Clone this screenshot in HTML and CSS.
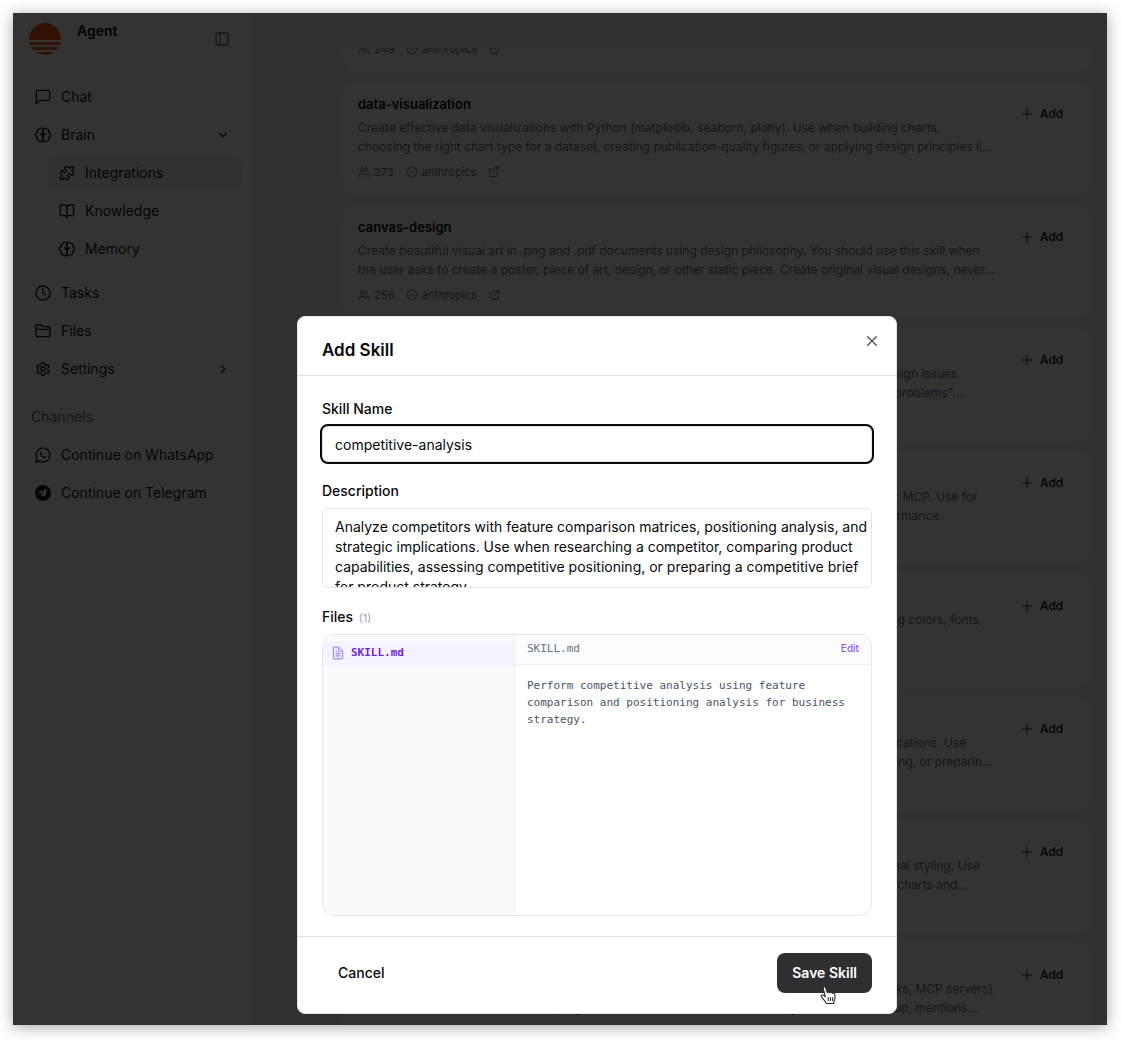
FILE: index.html
```
<!DOCTYPE html>
<html lang="en">
<head>
    <meta charset="UTF-8">
    <meta name="viewport" content="width=device-width, initial-scale=1.0">
    <title>Agent - Integrations</title>
    <link rel="stylesheet" href="styles.css">
</head>
<body>

<!-- Shared icons -->
<svg class="sprite" xmlns="http://www.w3.org/2000/svg">
    <symbol id="i-panel" viewBox="0 0 24 24"><rect x="3" y="3" width="18" height="18" rx="2"/><path d="M9 3v18"/></symbol>
    <symbol id="i-chat" viewBox="0 0 24 24"><path d="M22 15a2 2 0 0 1-2 2H7l-5 5V4a2 2 0 0 1 2-2h16a2 2 0 0 1 2 2z"/></symbol>
    <symbol id="i-brain" viewBox="0 0 24 24"><path d="M12 4a2.800 2.800 0 0 0-5.400-.5 3.300 3.300 0 0 0-3.200 4.500 4.300 4.300 0 0 0 0 8 3.400 3.400 0 0 0 3.300 4.700A2.800 2.800 0 0 0 12 20z"/><path d="M12 4a2.800 2.800 0 0 1 5.400-.5 3.300 3.300 0 0 1 3.200 4.500 4.300 4.300 0 0 1 0 8 3.400 3.400 0 0 1-3.300 4.700A2.800 2.800 0 0 1 12 20z"/><path d="M8 10c.5 1.500 2 2 4 2s3.500-.5 4-2"/></symbol>
    <symbol id="i-puzzle" viewBox="0 0 24 24"><path d="M15.39 4.39a1 1 0 0 0 1.68-.474 2.5 2.5 0 1 1 3.014 3.015 1 1 0 0 0-.474 1.68l1.683 1.682a2.414 2.414 0 0 1 0 3.414L19.61 15.39a1 1 0 0 1-1.68-.474 2.5 2.5 0 1 0-3.014 3.015 1 1 0 0 1 .474 1.68l-1.683 1.682a2.414 2.414 0 0 1-3.414 0L8.61 19.61a1 1 0 0 0-1.68.474 2.5 2.5 0 1 1-3.014-3.015 1 1 0 0 0 .474-1.68l-1.683-1.682a2.414 2.414 0 0 1 0-3.414L4.39 8.61a1 1 0 0 1 1.68.474 2.5 2.5 0 1 0 3.014-3.015 1 1 0 0 1-.474-1.68l1.683-1.682a2.414 2.414 0 0 1 3.414 0z"/></symbol>
    <symbol id="i-book" viewBox="0 0 24 24"><path d="M12 6.500v15M2 3h6a4 4 0 0 1 4 4 4 4 0 0 1 4-4h6v16h-7a3 3 0 0 0-3 3 3 3 0 0 0-3-3H2z"/></symbol>
    <symbol id="i-clock" viewBox="0 0 24 24"><circle cx="12" cy="12" r="10.500"/><path d="M12 6v6l3.500 2.500"/></symbol>
    <symbol id="i-folder" viewBox="0 0 24 24"><path d="M1.500 9.500h21M1.500 18.500V4.500a2 2 0 0 1 2-2h5l3 3h9a2 2 0 0 1 2 2v11a2 2 0 0 1-2 2h-17a2 2 0 0 1-2-2z"/></symbol>
    <symbol id="i-gear" viewBox="0 0 24 24"><path d="M12.22 2h-.44a2 2 0 0 0-2 2v.18a2 2 0 0 1-1 1.730l-.430.250a2 2 0 0 1-2 0l-.150-.080a2 2 0 0 0-2.730.730l-.220.380a2 2 0 0 0 .730 2.730l.150.100a2 2 0 0 1 1 1.720v.510a2 2 0 0 1-1 1.740l-.150.090a2 2 0 0 0-.730 2.730l.220.380a2 2 0 0 0 2.730.730l.150-.080a2 2 0 0 1 2 0l.430.250a2 2 0 0 1 1 1.730V20a2 2 0 0 0 2 2h.440a2 2 0 0 0 2-2v-.180a2 2 0 0 1 1-1.730l.430-.250a2 2 0 0 1 2 0l.150.080a2 2 0 0 0 2.730-.730l.220-.390a2 2 0 0 0-.730-2.730l-.150-.080a2 2 0 0 1-1-1.740v-.500a2 2 0 0 1 1-1.740l.150-.090a2 2 0 0 0 .730-2.730l-.220-.380a2 2 0 0 0-2.730-.730l-.150.080a2 2 0 0 1-2 0l-.430-.250a2 2 0 0 1-1-1.730V4a2 2 0 0 0-2-2z"/><circle cx="12" cy="12" r="3"/></symbol>
    <symbol id="i-down" viewBox="0 0 24 24"><path d="m6 9 6 6 6-6"/></symbol>
    <symbol id="i-right" viewBox="0 0 24 24"><path d="m9 18 6-6-6-6"/></symbol>
    <symbol id="i-whatsapp" viewBox="0 0 24 24"><path d="M1.500 22.500l1.500-5.600A10.400 10.400 0 1 1 7.200 21z"/><path d="M8.300 6.800c-1.300.8-1.500 2.600-.7 4.400 1.100 2.600 3 4.400 5.600 5.300 1.600.5 3.200 0 3.700-1.500l-2.600-1.500-1.300 1.200c-1.600-.8-2.600-1.800-3.300-3.200l1-1.200z" fill="currentColor" stroke="none"/></symbol>
    <symbol id="i-telegram" viewBox="0 0 24 24"><path d="M12 0a12 12 0 1 0 0 24 12 12 0 0 0 0-24zm5.600 7.300-2 9.700c-.2.700-.6.900-1.100.600l-3-2.300-1.600 1.500c-.2.200-.4.200-.6.100l.3-3.200 5.800-5.200-7.100 4.400-3.100-1c-.6-.2-.6-.6.200-.9l11.300-4.500c.6-.2 1.100.1.900.8z" fill="currentColor" fill-rule="evenodd" stroke="none"/></symbol>
    <symbol id="i-users" viewBox="0 0 24 24"><path d="M16 21v-2a4 4 0 0 0-4-4H6a4 4 0 0 0-4 4v2M22 21v-2a4 4 0 0 0-3-3.870M16 3.130a4 4 0 0 1 0 7.750"/><circle cx="9" cy="7" r="4"/></symbol>
    <symbol id="i-badge" viewBox="0 0 24 24"><path d="M3.850 8.620a4 4 0 0 1 4.780-4.770 4 4 0 0 1 6.740 0 4 4 0 0 1 4.780 4.780 4 4 0 0 1 0 6.740 4 4 0 0 1-4.770 4.780 4 4 0 0 1-6.750 0 4 4 0 0 1-4.780-4.770 4 4 0 0 1 0-6.760z"/><path d="m9 12 2 2 4-4"/></symbol>
    <symbol id="i-link" viewBox="0 0 24 24"><path d="M15 3h6v6M10 14 21 3M18 13v6a2 2 0 0 1-2 2H5a2 2 0 0 1-2-2V8a2 2 0 0 1 2-2h6"/></symbol>
    <symbol id="i-plus" viewBox="0 0 24 24"><path d="M2 12h20M12 2v20"/></symbol>
    <symbol id="i-x" viewBox="0 0 24 24"><path d="M18.500 5.500l-13 13M5.500 5.500l13 13"/></symbol>
</svg>

<div class="window">
    <aside class="sidebar">
        <div class="brand">
            <svg class="logo" viewBox="0 0 32 32">
                <clipPath id="sun"><circle cx="16" cy="16" r="16"/></clipPath>
                <g clip-path="url(#sun)">
                    <path d="M0 0h32v17H0zM0 19h32v3H0zM0 24h32v3H0zM0 29h32v3H0z"/>
                </g>
            </svg>
            <span class="brand-name">Agent</span>
            <button class="icon-button" aria-label="Toggle sidebar"><svg class="icon"><use href="#i-panel"/></svg></button>
        </div>

        <nav class="nav">
            <a href="#" class="nav-item"><svg class="icon"><use href="#i-chat"/></svg>Chat</a>
            <a href="#" class="nav-item"><svg class="icon"><use href="#i-brain"/></svg>Brain<svg class="icon chevron"><use href="#i-down"/></svg></a>
            <div class="subnav">
                <a href="#" class="nav-item active"><svg class="icon"><use href="#i-puzzle"/></svg>Integrations</a>
                <a href="#" class="nav-item"><svg class="icon"><use href="#i-book"/></svg>Knowledge</a>
                <a href="#" class="nav-item"><svg class="icon"><use href="#i-brain"/></svg>Memory</a>
            </div>
            <a href="#" class="nav-item"><svg class="icon"><use href="#i-clock"/></svg>Tasks</a>
            <a href="#" class="nav-item"><svg class="icon"><use href="#i-folder"/></svg>Files</a>
            <a href="#" class="nav-item"><svg class="icon"><use href="#i-gear"/></svg>Settings<svg class="icon chevron"><use href="#i-right"/></svg></a>
            <div class="nav-label">Channels</div>
            <a href="#" class="nav-item"><svg class="icon"><use href="#i-whatsapp"/></svg>Continue on WhatsApp</a>
            <a href="#" class="nav-item"><svg class="icon"><use href="#i-telegram"/></svg>Continue on Telegram</a>
        </nav>
    </aside>

    <main class="main">
        <div class="scroll">
            <div class="skills" id="skills"></div>
        </div>
    </main>

    <div class="overlay">
        <form class="modal" role="dialog" aria-labelledby="modal-title">
            <header class="modal-header">
                <h2 id="modal-title">Add Skill</h2>
                <button type="button" class="close" aria-label="Close"><svg class="icon"><use href="#i-x"/></svg></button>
            </header>

            <div class="modal-body">
                <div class="field">
                    <label for="skill-name">Skill Name</label>
                    <input type="text" id="skill-name" class="input focused" value="competitive-analysis">
                </div>
                <div class="field">
                    <label for="skill-desc">Description</label>
                    <textarea id="skill-desc" class="input">Analyze competitors with feature comparison matrices, positioning analysis, and
strategic implications. Use when researching a competitor, comparing product
capabilities, assessing competitive positioning, or preparing a competitive brief
for product strategy.</textarea>
                </div>
                <div class="field">
                    <div class="files-label">Files <span class="count">(1)</span></div>
                    <div class="files">
                        <div class="file-list">
                            <button type="button" class="file">
                                <svg class="file-icon" viewBox="0 0 24 24"><path d="M4 3.500A1.500 1.500 0 0 1 5.500 2H13l7 7v11.500a1.500 1.500 0 0 1-1.500 1.500h-13A1.500 1.500 0 0 1 4 20.500z"/><path d="M13 2v7h7M8 9h2M8 13h8M8 17h8"/></svg>
                                SKILL.md
                            </button>
                        </div>
                        <div class="preview">
                            <div class="preview-header">
                                <span class="preview-name">SKILL.md</span>
                                <button type="button" class="edit">Edit</button>
                            </div>
                            <div class="preview-text">Perform competitive analysis using feature comparison and positioning analysis for business strategy.</div>
                        </div>
                    </div>
                </div>
            </div>

            <footer class="modal-footer">
                <button type="button" class="button">Cancel</button>
                <button type="button" class="button primary">Save Skill
                    <svg class="cursor" viewBox="0 1 16 18"><path d="M6.500 17.500C5 15 3.500 13.300 2 11.500c-.8-1 .6-2.100 1.700-1.400L5.600 11.700 3.700 4c-.4-1.700 1.700-2.200 2.200-.6L7.400 8c.2-1 1.900-1.100 2.200.1.400-.9 2-.9 2.300.4.600-.7 2-.4 2.200.8.400 2 .6 3.300 0 4.900l-.9 2v1.500z"/><path d="M8.200 12v3.500M10.200 12v3.500M12.200 12v3.500"/></svg>
                </button>
            </footer>
        </form>
    </div>
</div>

<script src="script.js"></script>
</body>
</html>
```
FILE: styles.css
```
* {
    box-sizing: border-box;
}
body {
    margin: 0;
    padding: 13px 15px 15px 13px;
    height: 100vh;
    background-color: #fff;
    font-family: Inter, "Liberation Sans", sans-serif;
    font-size: 14px;
    line-height: 20px;
    color: #09090b;
}
button, input, textarea {
    font: inherit;
    color: inherit;
}
button {
    padding: 0;
    border: none;
    background: none;
    cursor: pointer;
}
.sprite {
    position: absolute;
    width: 0;
    height: 0;
}
.icon {
    width: 16px;
    height: 16px;
    flex-shrink: 0;
    fill: none;
    stroke: currentColor;
    stroke-width: 2;
    stroke-linecap: round;
    stroke-linejoin: round;
}
.window {
    position: relative;
    display: flex;
    height: 100%;
    overflow: hidden;
}
body::before {
    content: "";
    position: absolute;
    inset: 13px 15px 15px 13px;
    box-shadow: 0 2px 14px rgba(0, 0, 0, 0.35);
}

/* Sidebar */
.sidebar {
    width: 239px;
    flex-shrink: 0;
    padding: 10px;
    background-color: #fff;
}
.brand {
    display: flex;
    align-items: flex-start;
    padding: 0 12px 0 6px;
    margin-bottom: 26px;
}
.logo {
    width: 32px;
    height: 32px;
    fill: #ff5a1f;
}
.brand-name {
    flex: 1;
    margin-left: 16px;
    line-height: 16px;
    font-weight: 600;
}
.icon-button {
    display: flex;
    align-self: center;
    color: #64748b;
}
.nav {
    display: flex;
    flex-direction: column;
    gap: 6px;
}
.nav-item {
    display: flex;
    align-items: center;
    gap: 10px;
    height: 32px;
    padding: 0 12px;
    border-radius: 8px;
    color: #18181b;
    text-decoration: none;
}
.nav-item.active {
    background-color: #f1f5f9;
}
.chevron {
    width: 14px;
    height: 14px;
    margin-left: auto;
}
.subnav {
    display: flex;
    flex-direction: column;
    gap: 6px;
    padding: 0 0 6px 24px;
}
.nav-label {
    padding: 16px 8px 6px;
    color: #64748b;
}

/* Skill list */
.main {
    flex: 1;
    padding: 35px 15px 0 90px;
    background: linear-gradient(#f7f6f0 0, #f5f5f5 60px, #f5f5f5 150px, #f6f5ef 220px, #f6f5ef 380px, #f5f5f5 460px, #f5f5f5 620px, #f6f5ef 690px, #f5f5f5 760px);
}
.scroll {
    height: 100%;
    overflow: hidden;
}
.skills {
    display: flex;
    flex-direction: column;
    gap: 8px;
    margin-top: -90px;
}
.skill {
    display: flex;
    align-items: flex-start;
    justify-content: space-between;
    gap: 12px;
    flex-shrink: 0;
    padding: 14px 15px 15px;
    border: 1px solid #f8f8f8;
    border-radius: 16px;
    background-color: rgba(255, 255, 255, 0.7);
}
.skill-info {
    width: 638px;
}
.skill h3 {
    margin: 0 0 6px;
    font-size: 13px;
    line-height: 16px;
    font-weight: 600;
}
.skill p {
    height: 38px;
    margin: 0 0 8px;
    font-size: 12px;
    line-height: 19px;
    color: #64748b;
    white-space: pre;
}
.meta {
    display: flex;
    align-items: center;
    gap: 12px;
    font-size: 11px;
    line-height: 16px;
    color: #64748b;
}
.meta span {
    display: flex;
    align-items: center;
    gap: 4px;
}
.meta .icon, .add .icon {
    width: 12px;
    height: 12px;
}
.add {
    display: flex;
    align-items: center;
    gap: 7px;
    height: 32px;
    margin-top: 2px;
    padding: 0 12px;
    border: 1px solid #f1f3f6;
    border-radius: 10px;
    font-size: 12px;
    font-weight: 500;
}
.add .icon {
    color: #3f3f46;
}

/* Modal */
.overlay {
    position: absolute;
    inset: 0;
    display: flex;
    justify-content: center;
    align-items: flex-end;
    padding: 0 0 11px 74px;
    background-color: rgba(0, 0, 0, 0.8);
}
.modal {
    width: 600px;
    border: 1px solid #e4e4e7;
    border-radius: 8px;
    background-color: #fff;
}
.modal-header {
    display: flex;
    justify-content: space-between;
    padding: 16px 16px 13px 24px;
    border-bottom: 1px solid #e4e4e7;
}
.modal-header h2 {
    margin: 5px 0 0;
    font-size: 17px;
    line-height: 24px;
    font-weight: 600;
}
.close {
    display: flex;
    height: 16px;
    color: #52525b;
}
.modal-body {
    display: flex;
    flex-direction: column;
    gap: 19px;
    padding: 23px 24px 20px;
}
.field {
    display: flex;
    flex-direction: column;
    gap: 7px;
    font-weight: 500;
}
.input {
    width: 100%;
    height: 36px;
    padding: 7px 12px;
    border: 1px solid #e4e4e7;
    border-radius: 6px;
    background-color: #fff;
    font-weight: 400;
    outline: none;
}
.input.focused {
    outline: 2px solid #09090b;
}
textarea.input {
    display: block;
    height: 80px;
    padding: 8px 0 8px 12px;
    resize: none;
    overflow: hidden;
}
.files-label {
    height: 20px;
}
.count {
    margin-left: 2px;
    font-size: 11px;
    font-weight: 400;
    color: #94a3b8;
}
.files {
    display: flex;
    height: 282px;
    border: 1px solid #e2e8f0;
    border-radius: 12px;
    overflow: hidden;
    font-family: "DejaVu Sans Mono", monospace;
    font-size: 11px;
    line-height: 17px;
    font-weight: 400;
}
.file-list {
    width: 192px;
    padding-top: 6px;
    border-right: 1px solid #edf1f7;
    background-color: #fafbfe;
}
.file {
    display: flex;
    align-items: center;
    gap: 6px;
    width: 100%;
    height: 25px;
    padding: 0 8px 2px;
    background-color: #f5f3ff;
    font-weight: 700;
    color: #6d28d9;
}
.file-icon {
    width: 14px;
    height: 14px;
    fill: #ede9fe;
    stroke: #a78bfa;
    stroke-width: 2;
    stroke-linejoin: round;
}
.preview {
    flex: 1;
}
.preview-header {
    display: flex;
    align-items: center;
    justify-content: space-between;
    height: 30px;
    padding: 0 12px 2px;
    border-bottom: 1px solid #edf1f7;
    background-color: #fcfdfe;
    color: #64748b;
}
.edit {
    font-family: Inter, sans-serif;
    font-size: 10px;
    font-weight: 500;
    color: #9352f5;
}
.preview-text {
    padding: 12px;
    color: #475569;
}
.modal-footer {
    display: flex;
    justify-content: space-between;
    padding: 16px 24px 20px;
    border-top: 1px solid #e4e4e7;
}
.button {
    position: relative;
    height: 40px;
    padding: 0 16px;
    border-radius: 8px;
    font-weight: 500;
}
.button.primary {
    padding: 0 15px;
    background-color: #2f2f31;
    font-weight: 600;
    color: #fff;
}
.cursor {
    position: absolute;
    left: 42px;
    top: 32px;
    width: 18px;
    height: 20px;
    fill: #fff;
    stroke: #27272a;
    stroke-width: 1;
    stroke-linejoin: round;
}
```
FILE: script.js
```
// [name, line 1, line 2, installs]
const skills = [
    ['pdf-forms', 'Fill, merge and split PDF documents. Use when working with forms,', 'tables or scanned pages.', 249],
    ['data-visualization', 'Create effective data visualizations with Python (matplotlib, seaborn, plotly). Use when building charts,', 'choosing the right chart type for a dataset, creating publication-quality figures, or applying design principles li...', 273],
    ['canvas-design', 'Create beautiful visual art in .png and .pdf documents using design philosophy. You should use this skill when', 'the user asks to create a poster, piece of art, design, or other static piece. Create original visual designs, never...', 256],
    ['web-design-review', 'Inspect websites running locally or remotely, then identify and fix layout, spacing and visual design issues.', 'Triggers on requests like "review website design", "check the UI", "fix the layout", "find design problems"....', 240],
    ['chrome-devtools', 'Browser automation, remote debugging and performance analysis using Chrome DevTools over MCP. Use for', 'interacting with web tabs, capturing page screenshots and network traffic, and analyzing performance.', 231],
    ['theme-factory', 'Toolkit for styling slides, sheets, reports, and landing pages using ready-made themes, including colors, fonts,', 'and layouts.', 228],
    ['pptx', 'Presentation creation, editing and analysis, from sales decks to internal meeting talks and publications. Use', 'when creating new presentations, modifying content, adding new layouts, comments, note writing, or preparin...', 224],
    ['xlsx', 'Spreadsheet creation, editing, and analysis with formulas, conditional formatting and professional styling. Use', 'when working with workbooks, reading tabular data, building financial models, or adding clean charts and...', 219],
    ['plugin-setup', 'Configure and customize plugins for your own team workspace (commands, agents, skills, hooks, MCP servers).', 'Use when a user wants to create a plugin from scratch, customize an existing one, asks for setup, mentions...', 214]
];

document.getElementById('skills').innerHTML = skills.map(([name, first, second, installs]) => `
    <article class="skill">
        <div class="skill-info">
            <h3>${name}</h3>
            <p>${first}\n${second}</p>
            <div class="meta">
                <span><svg class="icon"><use href="#i-users"/></svg>${installs}</span>
                <span><svg class="icon"><use href="#i-badge"/></svg>anthropics</span>
                <svg class="icon"><use href="#i-link"/></svg>
            </div>
        </div>
        <button class="add"><svg class="icon"><use href="#i-plus"/></svg>Add</button>
    </article>`).join('');
```
